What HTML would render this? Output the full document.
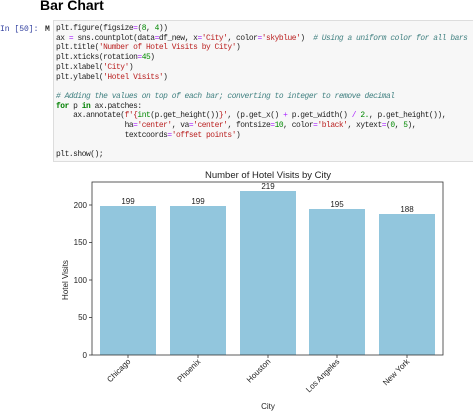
<!DOCTYPE html>
<html><head><style>
body{margin:0;width:473px;height:411px;background:#fff;position:relative;overflow:hidden;font-family:"Liberation Sans",sans-serif}
h1{position:absolute;left:40px;top:-3px;margin:0;font-size:14px;font-weight:bold;color:#000}
.in{position:absolute;left:0;top:25px;font:8px "Liberation Mono",monospace;color:#303f9f}
.run{position:absolute;left:45px;top:25px;font:bold 8px "Liberation Mono",monospace;color:#333}
.code{position:absolute;left:53px;top:20px;width:430px;height:142px;background:#f7f7f7;border:1px solid #ddd;box-sizing:border-box}
pre{position:absolute;left:56px;top:24px;width:417px;overflow:hidden;margin:0;font:7.9px/9.7px "Liberation Mono",monospace;letter-spacing:-0.45px;color:#222;white-space:pre}
.s{color:#ba2121}.c{color:#408080;font-style:italic}.k{color:#008000;font-weight:bold}.n{color:#080}.o{color:#a2f}
</style></head><body>
<h1>Bar Chart</h1>
<div class="in">In [50]:</div>
<div class="run">M</div>
<div class="code"></div>
<pre>plt.figure(figsize<span class="o">=</span>(<span class="n">8</span>, <span class="n">4</span>))
ax <span class="o">=</span> sns.countplot(data<span class="o">=</span>df_new, x<span class="o">=</span><span class="s">'City'</span>, color<span class="o">=</span><span class="s">'skyblue'</span>)  <span class="c"># Using a uniform color for all bars</span>
plt.title(<span class="s">'Number of Hotel Visits by City'</span>)
plt.xticks(rotation<span class="o">=</span><span class="n">45</span>)
plt.xlabel(<span class="s">'City'</span>)
plt.ylabel(<span class="s">'Hotel Visits'</span>)

<span class="c"># Adding the values on top of each bar; converting to integer to remove decimal</span>
<span class="k">for</span> p <span class="k">in</span> ax.patches:
    ax.annotate(<span class="s">f'{</span><span class="n">int</span>(p.get_height())<span class="s">}'</span>, (p.get_x() <span class="o">+</span> p.get_width() <span class="o">/</span> <span class="n">2.</span>, p.get_height()),
                ha<span class="o">=</span><span class="s">'center'</span>, va<span class="o">=</span><span class="s">'center'</span>, fontsize<span class="o">=</span><span class="n">10</span>, color<span class="o">=</span><span class="s">'black'</span>, xytext<span class="o">=</span>(<span class="n">0</span>, <span class="n">5</span>),
                textcoords<span class="o">=</span><span class="s">'offset points'</span>)

plt.show();</pre>
<svg width="473" height="411" style="position:absolute;left:0;top:0" font-family="Liberation Sans, sans-serif" fill="#222">
<text x="268" y="178" font-size="9.5" text-anchor="middle">Number of Hotel Visits by City</text>
<g fill="#92c6dd">
<rect x="100" y="206" width="56" height="149"/>
<rect x="170" y="206" width="56" height="149"/>
<rect x="240" y="191" width="56" height="164"/>
<rect x="309" y="209" width="56" height="146"/>
<rect x="379" y="214" width="56" height="141"/>
</g>
<g font-size="8" text-anchor="middle">
<text x="128" y="204">199</text><text x="198" y="204">199</text><text x="268" y="189">219</text><text x="337" y="207">195</text><text x="407" y="212">188</text>
</g>
<rect x="92" y="182" width="351" height="173" fill="none" stroke="#333" stroke-width="0.8"/>
<g stroke="#333" stroke-width="0.8">
<line x1="89" y1="355" x2="92" y2="355"/><line x1="89" y1="317.5" x2="92" y2="317.5"/><line x1="89" y1="280" x2="92" y2="280"/><line x1="89" y1="242.5" x2="92" y2="242.5"/><line x1="89" y1="205" x2="92" y2="205"/>
<line x1="128" y1="355" x2="128" y2="358"/><line x1="198" y1="355" x2="198" y2="358"/><line x1="268" y1="355" x2="268" y2="358"/><line x1="337" y1="355" x2="337" y2="358"/><line x1="407" y1="355" x2="407" y2="358"/>
</g>
<g font-size="8" text-anchor="end">
<text x="87" y="358">0</text><text x="87" y="320">50</text><text x="87" y="283">100</text><text x="87" y="245">150</text><text x="87" y="208">200</text>
</g>
<g font-size="8" text-anchor="end">
<text transform="translate(131,362) rotate(-45)">Chicago</text>
<text transform="translate(201,362) rotate(-45)">Phoenix</text>
<text transform="translate(271,362) rotate(-45)">Houston</text>
<text transform="translate(340,362) rotate(-45)">Los Angeles</text>
<text transform="translate(410,362) rotate(-45)">New York</text>
</g>
<text x="268" y="409" font-size="8" text-anchor="middle">City</text>
<text transform="translate(68,280) rotate(-90)" font-size="8" text-anchor="middle">Hotel Visits</text>
</svg>
</body></html>
